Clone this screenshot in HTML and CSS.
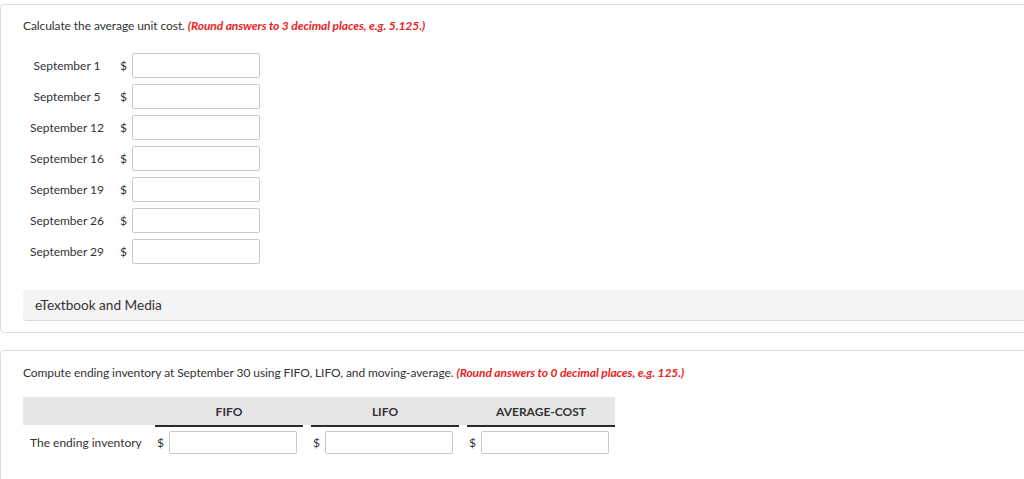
FILE: index.html
```html
<!DOCTYPE html>
<html>
<head>
<meta charset="utf-8">
<link rel="stylesheet" href="styles.css">
</head>
<body>
<section class="panel panel-first">
  <p class="prompt">Calculate the average unit cost. <em class="hint">(Round answers to 3 decimal places, e.g. 5.125.)</em></p>
  <div class="cost-grid">
    <span class="date">September 1</span><span class="cur">$</span><input class="field" type="text">
    <span class="date">September 5</span><span class="cur">$</span><input class="field" type="text">
    <span class="date">September 12</span><span class="cur">$</span><input class="field" type="text">
    <span class="date">September 16</span><span class="cur">$</span><input class="field" type="text">
    <span class="date">September 19</span><span class="cur">$</span><input class="field" type="text">
    <span class="date">September 26</span><span class="cur">$</span><input class="field" type="text">
    <span class="date">September 29</span><span class="cur">$</span><input class="field" type="text">
  </div>
  <div class="media">eTextbook and Media</div>
</section>
<section class="panel panel-second">
  <p class="prompt">Compute ending inventory at September 30 using FIFO, LIFO, and moving-average. <em class="hint">(Round answers to 0 decimal places, e.g. 125.)</em></p>
  <div class="inv-table">
    <div class="th th-blank"></div>
    <div class="th th-col">FIFO</div>
    <div class="th th-gap"></div>
    <div class="th th-col">LIFO</div>
    <div class="th th-gap"></div>
    <div class="th th-col">AVERAGE-COST</div>
    <div class="td td-label">The ending inventory</div>
    <div class="td td-cell"><span class="cur2">$</span><input class="field2" type="text"></div>
    <div class="td"></div>
    <div class="td td-cell"><span class="cur2">$</span><input class="field2" type="text"></div>
    <div class="td"></div>
    <div class="td td-cell"><span class="cur2">$</span><input class="field2" type="text"></div>
  </div>
</section>
</body>
</html>
```

FILE: styles.css
```css
html, body {
  margin: 0;
  padding: 0;
  background: #fff;
  overflow: hidden;
}
body {
  font-family: Lato, "Open Sans", sans-serif;
  color: #333;
  width: 1024px;
  height: 479px;
}
.panel {
  width: 1100px;
  border: 1px solid #dcdcdc;
  border-radius: 4px;
  box-sizing: border-box;
  padding-left: 22px;
}
.panel-first {
  margin-top: 4px;
  padding-top: 13px;
  padding-bottom: 11px;
}
.panel-second {
  margin-top: 17px;
  padding-top: 14px;
  height: 200px;
}
.prompt {
  margin: 0;
  font-size: 12px;
  line-height: 16px;
  letter-spacing: -0.08px;
}
.hint {
  color: #e8231e;
  font-style: italic;
  font-weight: bold;
}
.cost-grid {
  margin-top: 19px;
  display: grid;
  grid-template-columns: 88px 21px 128px;
  grid-auto-rows: 25px;
  row-gap: 6px;
  align-items: center;
}
.date {
  font-size: 12px;
  text-align: center;
}
.cur {
  font-size: 12px;
  text-align: right;
  padding-right: 5px;
}
.field {
  box-sizing: border-box;
  width: 128px;
  height: 25px;
  margin: 0;
  border: 1px solid #c9c9c9;
  border-radius: 2px;
  background: #fff;
  padding: 0 4px;
}
.media {
  margin-top: 26px;
  height: 31px;
  box-sizing: border-box;
  background: #f4f4f4;
  border-bottom: 1px solid #dadada;
  border-radius: 4px;
  padding-left: 12px;
  font-size: 13.6px;
  line-height: 31px;
  color: #333;
}
.inv-table {
  margin-top: 16px;
  display: grid;
  grid-template-columns: 132px 148px 8px 148px 8px 148px;
}
.th {
  background: #e6e6e6;
  height: 30px;
  box-sizing: border-box;
  font-size: 12px;
  font-weight: bold;
  text-align: center;
  line-height: 29px;
  border-bottom: 2px solid #fff;
}
.th-col {
  border-bottom-color: #2b2b2b;
}
.td {
  padding-top: 4px;
  height: 23px;
}
.td-label {
  font-size: 12px;
  line-height: 23px;
  padding-left: 7px;
}
.td-cell {
  display: flex;
  align-items: center;
}
.cur2 {
  font-size: 12px;
  width: 14px;
  padding-left: 2px;
  box-sizing: border-box;
}
.field2 {
  box-sizing: border-box;
  width: 128px;
  height: 23px;
  margin: 0;
  border: 1px solid #c9c9c9;
  border-radius: 2px;
  background: #fff;
  padding: 0 4px;
}
```
